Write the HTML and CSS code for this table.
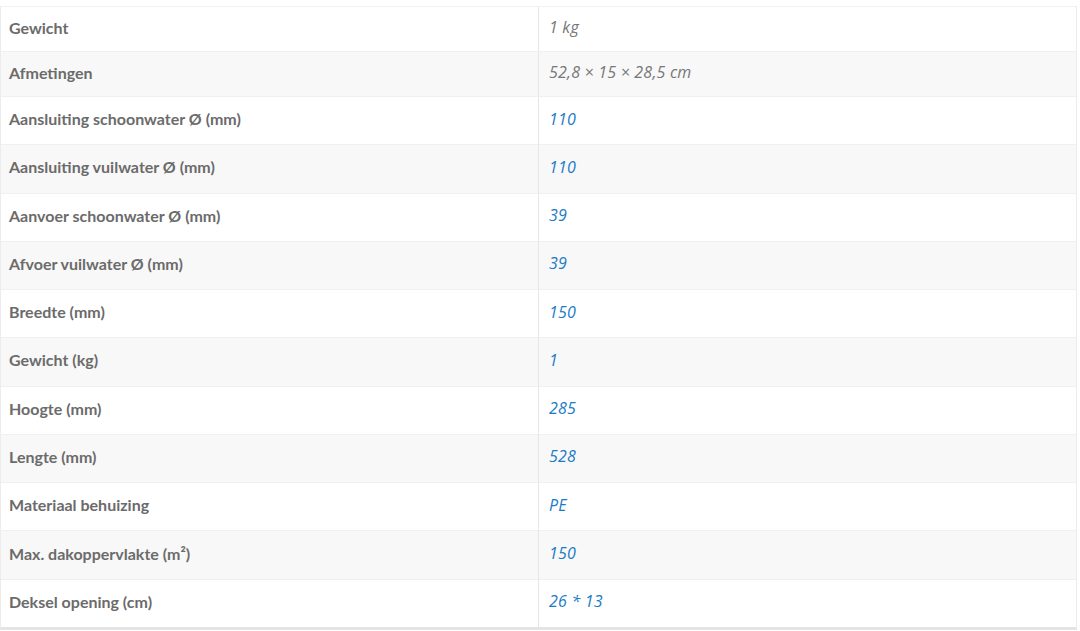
FILE: index.html
```html
<!DOCTYPE html>
<html lang="nl">
<head>
    <meta charset="UTF-8">
    <meta name="viewport" content="width=device-width, initial-scale=1.0">
    <title>Extra informatie</title>
    <link rel="stylesheet" href="styles.css">
</head>
<body>
    <table class="shop-attributes">
        <tr class="plain">
            <th>Gewicht</th>
            <td>1 kg</td>
        </tr>
        <tr class="plain">
            <th>Afmetingen</th>
            <td>52,8 &times; 15 &times; 28,5 cm</td>
        </tr>
        <tr>
            <th>Aansluiting schoonwater Ø (mm)</th>
            <td><p><a href="#">110</a></p></td>
        </tr>
        <tr>
            <th>Aansluiting vuilwater Ø (mm)</th>
            <td><p><a href="#">110</a></p></td>
        </tr>
        <tr>
            <th>Aanvoer schoonwater Ø (mm)</th>
            <td><p><a href="#">39</a></p></td>
        </tr>
        <tr>
            <th>Afvoer vuilwater Ø (mm)</th>
            <td><p><a href="#">39</a></p></td>
        </tr>
        <tr>
            <th>Breedte (mm)</th>
            <td><p><a href="#">150</a></p></td>
        </tr>
        <tr>
            <th>Gewicht (kg)</th>
            <td><p><a href="#">1</a></p></td>
        </tr>
        <tr>
            <th>Hoogte (mm)</th>
            <td><p><a href="#">285</a></p></td>
        </tr>
        <tr>
            <th>Lengte (mm)</th>
            <td><p><a href="#">528</a></p></td>
        </tr>
        <tr>
            <th>Materiaal behuizing</th>
            <td><p><a href="#">PE</a></p></td>
        </tr>
        <tr>
            <th>Max. dakoppervlakte (m²)</th>
            <td><p><a href="#">150</a></p></td>
        </tr>
        <tr>
            <th>Deksel opening (cm)</th>
            <td><p><a href="#">26 * 13</a></p></td>
        </tr>
    </table>
</body>
</html>
```

FILE: styles.css
```css
body {
    margin: 0;
    padding: 6px 0 0 0;
    background-color: #fff;
}

.shop-attributes {
    width: 1077px;
    border-collapse: separate;
    border-spacing: 0;
    border: 1px solid #ececec;
    border-bottom: 3px solid #e4e4e4;
    border-top-color: #f1f1f1;
}

.shop-attributes tr:nth-child(even) th,
.shop-attributes tr:nth-child(even) td {
    background-color: #f8f8f8;
}

.shop-attributes th,
.shop-attributes td {
    height: 43.27px;
    padding: 0 0 4px 0;
    border-bottom: 1px solid #f0f0f0;
    vertical-align: middle;
    text-align: left;
}

.shop-attributes tr.plain th,
.shop-attributes tr.plain td {
    height: 40px;
}

.shop-attributes tr:last-child th,
.shop-attributes tr:last-child td {
    border-bottom: none;
}

.shop-attributes th {
    width: 529px;
    padding-left: 8px;
    font-family: Lato, "Open Sans", sans-serif;
    font-weight: 700;
    font-size: 16px;
    color: #6b6b6b;
    border-right: 1px solid #e6e6e6;
}

.shop-attributes td {
    padding-left: 10px;
    font-family: "Open Sans", sans-serif;
    font-style: italic;
    font-size: 16px;
    letter-spacing: 0.2px;
    color: #777;
}

.shop-attributes td p {
    margin: 0;
}

.shop-attributes a {
    color: #1a7bc6;
    text-decoration: none;
}
```
